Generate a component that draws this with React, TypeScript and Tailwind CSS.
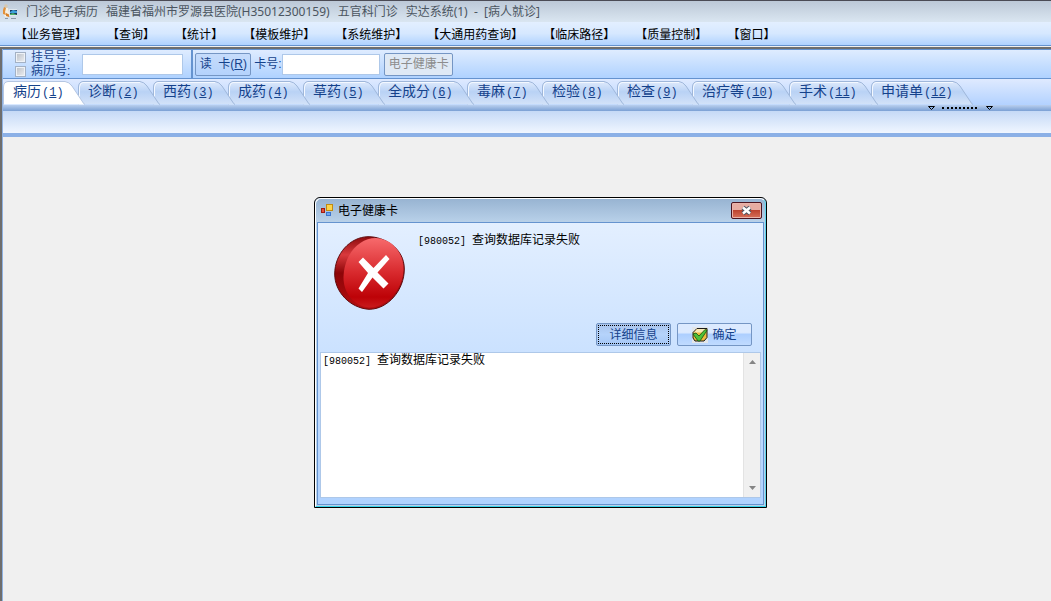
import { useState } from 'react';

const MENUS = ['业务管理', '查询', '统计', '模板维护', '系统维护', '大通用药查询', '临床路径', '质量控制', '窗口'];

const TABS = [
  { name: '病历', no: '1', width: 75 },
  { name: '诊断', no: '2', width: 75 },
  { name: '西药', no: '3', width: 75 },
  { name: '成药', no: '4', width: 75 },
  { name: '草药', no: '5', width: 75 },
  { name: '全成分', no: '6', width: 89 },
  { name: '毒麻', no: '7', width: 75 },
  { name: '检验', no: '8', width: 75 },
  { name: '检查', no: '9', width: 75 },
  { name: '治疗等', no: '10', width: 97 },
  { name: '手术', no: '11', width: 82 },
  { name: '申请单', no: '12', width: 95 },
];

const ERROR_TEXT = '查询数据库记录失败';

function AppIcon() {
  return (
    <svg className="h-4 w-4 shrink-0" viewBox="0 0 16 16">
      <circle cx="4" cy="2" r="1.800" fill="#d8c8b0" />
      <path d="M2 4h4l1 5-1 4H3L1 9z" fill="#f6efe2" />
      <path d="M2 3l2 1-1 4 1 3-3-1V6z" fill="#e2913a" />
      <path d="M4 9l4 2-1 2-3-1z" fill="#d9822b" />
      <rect x="7" y="5" width="8" height="7" fill="#dfe7ee" />
      <rect x="8" y="6" width="7" height="5" fill="#17355c" />
      <path d="M8 8l3-2 4 1v2H8z" fill="#3fa0dc" />
      <path d="M8 10l3-1 4 2H8z" fill="#4fb06a" />
      <path d="M3 14.500h3M9 14.500h5" stroke="#8a98a8" />
    </svg>
  );
}

function FormIcon() {
  return (
    <svg className="h-[14px] w-[14px]" viewBox="0 0 14 14">
      <rect x="6.5" y=".5" width="6" height="6" fill="#fbd34b" stroke="#c08a10" />
      <rect x="1.500" y="4.500" width="3" height="4" fill="#e4503a" stroke="#a01c10" />
      <rect x="6.500" y="8.500" width="4" height="3" fill="#6aa5f0" stroke="#3c74cc" />
    </svg>
  );
}

function ErrorIcon() {
  return (
    <svg className="mt-[3px] h-[74px] w-[71px] shrink-0" viewBox="0 0 71 74">
      <defs>
        <linearGradient id="face" x1="0" y1="0" x2="0" y2="1">
          <stop offset="0" stopColor="#f76a6c" />
          <stop offset="0.5" stopColor="#d8292d" />
          <stop offset="0.85" stopColor="#bd0207" />
          <stop offset="1" stopColor="#c81a1c" />
        </linearGradient>
        <linearGradient id="side" x1="0" y1="0" x2="0" y2="1">
          <stop offset="0" stopColor="#8d0a0d" />
          <stop offset="0.25" stopColor="#d93a3d" />
          <stop offset="0.5" stopColor="#8c0508" />
          <stop offset="1" stopColor="#b50d10" />
        </linearGradient>
      </defs>
      <path d="M34 .7C50 .5 70.3 12 70.3 33C70.3 54 54 73.3 35 73.3C16 72 .7 56 .7 38C.7 18 16 1 34 .7z" fill="url(#side)" stroke="#5e0a0c" />
      <path d="M42 2C58 3 69.5 16 69.5 34C69 54 52 71.5 35 71.5C19 70 9.500 56 9.500 42C9.500 20 24 2 42 2z" fill="url(#face)" />
      <path d="M29 21.500L39.500 32L52 19L55.500 23L43.500 36.500L54.500 47.500L49.500 52.500L38.500 41.500L28 56L24.500 52.500L34 37L24.500 26z" fill="#fff" />
    </svg>
  );
}

function OkIcon() {
  return (
    <svg className="h-4 w-4" viewBox="0 0 16 16">
      <path d="M0 0h16v16H0z" fill="#e3e6e8" />
      <path d="M1 5.500L5 1.500h10v9L12 14H3L1 11z" fill="#f0bb3e" stroke="#1b1b1b" />
      <path d="M5 2h9l-3 3.500H2z" fill="#fbe9b4" />
      <path d="M1 7l3-1 3 3 6-6.500 2 1L8 14H6z" fill="#4fc038" stroke="#14520c" strokeWidth="0.800" />
    </svg>
  );
}

type TabProps = { name: string; no: string; width: number; active: boolean; onClick: () => void };

function Tab({ name, no, width, active, onClick }: TabProps) {
  // the slanted edge runs over the left side of the next tab
  const w = width + 7;
  const shape = `M.5 23.500V6Q.5 1 5 .5H${w - 20}Q${w - 16} 1 ${w - 13} 5L${w - 3} 20Q${w - 1} 23.500 ${w} 23.500`;
  return (
    <button
      role="tab"
      aria-selected={active}
      onClick={onClick}
      className="relative h-6 shrink-0 pb-1 pl-[10px] text-left text-[14px] leading-5 text-[#15428b]"
      style={{ width }}
    >
      <svg className="absolute top-0 left-0 h-6" width={w + 1} height="24">
        <path d={shape} fill={active ? '#fff' : 'url(#tabFill)'} stroke={active ? '#b4c6e2' : '#9fb7da'} />
        {!active && <path d={`M1.500 22V6Q2 2 5 1.500H${w - 20}`} fill="none" stroke="#f3f8ff" />}
      </svg>
      <span className="relative whitespace-nowrap">
        {name}
        <span className="pl-px font-['Liberation_Mono',monospace] text-[12px]">
          (<u>{no}</u>)
        </span>
      </span>
    </button>
  );
}

function ErrorDialog() {
  return (
    <div
      role="dialog"
      aria-labelledby="dlg-title"
      className="absolute top-[197px] left-[314px] z-20 w-[453px] rounded-t-md border border-black bg-[#b4cae2] text-[12px]"
    >
      <div className="rounded-t-md border border-t-white border-r-[#5fd6ee] border-b-[#35d3ea] border-l-white bg-linear-to-b from-[#98b4d2] to-[#bad2ea] to-[24px] px-px pb-px">
        <div className="flex h-[23px] items-center gap-1 pl-[3px]">
          <FormIcon />
          <h1 id="dlg-title" className="flex-1 leading-4 text-black">电子健康卡</h1>
          <button
            aria-label="关闭"
            className="mr-[2px] flex h-[17px] w-[31px] items-center justify-center rounded-xs border border-[#4c1420] bg-linear-to-b from-[#e7aca2] from-45% via-[#bd4430] via-50% to-[#d8705a] shadow-[inset_0_0_0_1px_#e9b3aa]"
          >
            <svg width="13" height="11" viewBox="0 0 13 11">
              <path d="M3 2.500l7 6M10 2.500l-7 6" stroke="#4b5563" strokeWidth="4.500" />
              <path d="M3 2.500l7 6M10 2.500l-7 6" stroke="#fff" strokeWidth="2.500" />
            </svg>
          </button>
        </div>
        <div className="border border-[#6593cf] bg-linear-to-b from-[#e3efff] to-[#afd2ff] px-[2px] pb-[6px]">
          <div className="flex items-start gap-[13px] pt-[10px] pl-[14px]">
            <ErrorIcon />
            <p className="text-black leading-[14px] whitespace-nowrap">
              <span className="font-['Liberation_Mono',monospace] text-[10px]">[980052] </span>
              {ERROR_TEXT}
            </p>
          </div>
          <div className="mt-[13px] flex justify-end gap-[6px] pr-[9px] text-[#15428b]">
            <button className="h-[23px] w-[75px] rounded-xs border border-[#7596c4] bg-linear-to-b from-[#a9c4ec] via-[#b5d3fb] to-[#a4c6f5] p-px">
              <span className="flex h-full items-center justify-center border border-dotted border-black">详细信息</span>
            </button>
            <button className="flex h-[23px] w-[75px] items-center justify-center gap-1 rounded-xs border border-[#7596c4] bg-linear-to-b from-[#dceaff] from-40% via-[#adcfff] via-50% to-[#c0dbff]">
              <OkIcon />
              确定
            </button>
          </div>
          <div className="mt-[6px] flex h-[146px] border border-[#aec8e9] bg-white">
            <p className="flex-1 pl-[2px] text-black leading-[14px]">
              <span className="font-['Liberation_Mono',monospace] text-[10px]">[980052] </span>
              {ERROR_TEXT}
            </p>
            <div className="flex w-[17px] flex-col items-center justify-between border-l border-[#e3e3e3] bg-[#f0f0f0] py-[7px]">
              <svg width="7" height="4"><path d="M0 4l3.500-4 3.500 4z" fill="#858585" /></svg>
              <svg width="7" height="4"><path d="M0 0l3.500 4 3.500-4z" fill="#858585" /></svg>
            </div>
          </div>
        </div>
      </div>
    </div>
  );
}

export default function App() {
  const [tab, setTab] = useState('1');
  const [cardNo, setCardNo] = useState('');
  const [keyword, setKeyword] = useState('');

  return (
    <div className="relative flex min-h-screen flex-col overflow-hidden bg-[#f0f0f0] font-['Liberation_Sans','Noto_Sans_CJK_SC',sans-serif] text-[12px]">
      <header className="flex h-[22px] items-center gap-2 border-t border-[#4b4b55] bg-linear-to-b from-[#bcc8d7] to-[#dae6f1] pl-[2px] leading-5 whitespace-nowrap text-[#4b5560]">
        <AppIcon />
        <span>门诊电子病历</span>
        <span className="font-['Noto_Sans','Noto_Sans_CJK_SC',sans-serif]">福建省福州市罗源县医院(H35012300159)</span>
        <span>五官科门诊</span>
        <span className="font-['Noto_Sans','Noto_Sans_CJK_SC',sans-serif]">实达系统(1)&nbsp; -&nbsp; [病人就诊]</span>
      </header>

      <nav className="flex h-6 items-center gap-5 border-b border-[#6593cf] bg-linear-to-b from-[#e3efff] via-[#d6e8ff] to-[#afd2ff] pt-[3px] pl-[15px] whitespace-nowrap text-black">
        {MENUS.map((m) => (
          <button key={m} className="leading-4">【{m}】</button>
        ))}
      </nav>

      <main className="mt-px flex flex-1 flex-col border-t-2 border-l-2 border-[#6e6e6e]">
        <div className="flex flex-1 flex-col border-l border-[#8fb2e2]">
          <div className="flex h-[30px] items-center border-y border-[#6593cf] bg-linear-to-b from-[#dfecff] to-[#afd2ff] pl-3 whitespace-nowrap text-[#15428b]">
            <div className="flex flex-col">
              {['挂号号:', '病历号:'].map((t) => (
                <label key={t} className="flex h-[14px] items-center gap-[5px] leading-[14px]">
                  <input
                    type="checkbox"
                    className="h-[11px] w-[11px] appearance-none border border-[#a3b1c4] bg-linear-to-br from-[#b9bec6] to-[#eef0f2] shadow-[inset_0_0_0_1px_#eef2f7]"
                  />
                  {t}
                </label>
              ))}
            </div>
            <input
              aria-label="挂号号/病历号"
              value={keyword}
              onChange={(e) => setKeyword(e.target.value)}
              className="ml-3 h-[21px] w-[101px] border border-[#aec8e9] bg-white px-1"
            />
            <div className="mr-[2px] ml-2 h-full w-[2px] bg-[#6593cf]" />
            <button className="h-[23px] w-14 rounded-xs border border-[#7596c4] bg-linear-to-b from-[#c6dcfb] to-[#b4d2fc]">
              读&nbsp; 卡(<u>R</u>)
            </button>
            <label htmlFor="card" className="ml-[3px] w-7">卡号:</label>
            <input
              id="card"
              value={cardNo}
              onChange={(e) => setCardNo(e.target.value)}
              className="h-[21px] w-[98px] border border-[#aec8e9] bg-white px-1"
            />
            <button disabled className="ml-1 h-[23px] w-[69px] rounded-xs border border-[#7596c4] bg-[#dfe9f5] text-[#8d8d8d]">
              电子健康卡
            </button>
          </div>

          <div className="bg-linear-to-b from-[#dfeaff] to-[#b3d2ff] pt-[2px]">
            <svg className="absolute h-0 w-0">
              <defs>
                <linearGradient id="tabFill" x1="0" y1="0" x2="0" y2="1">
                  <stop offset="0" stopColor="#dfeafc" />
                  <stop offset="0.45" stopColor="#b9d2f5" />
                  <stop offset="1" stopColor="#d3e2f8" />
                </linearGradient>
              </defs>
            </svg>
            {/* reversed so that each tab paints over the one to its right */}
            <div role="tablist" className="flex flex-row-reverse justify-end">
              {[...TABS].reverse().map((t) => (
                <Tab key={t.no} {...t} active={t.no === tab} onClick={() => setTab(t.no)} />
              ))}
            </div>
          </div>
          <div className="flex h-[6px] items-center bg-linear-to-b from-[#b9cfee] to-[#7ba0d4] pl-[925px]">
            <svg width="7" height="5"><path d="M.5 .5h6L3.500 3.500z" fill="#8fb5ea" stroke="#000" /></svg>
            <div className="mr-[9px] ml-[7px] h-[2px] w-[35px] border-t-2 border-dotted border-black" />
            <svg width="7" height="5"><path d="M.5 .5h6L3.500 3.500z" fill="#8fb5ea" stroke="#000" /></svg>
          </div>
          <div className="h-[22px] bg-linear-to-b from-[#c5d9f6] to-[#f0f6ff]" />
          <div className="h-1 bg-[#8bb0e6]" />
        </div>
      </main>

      <ErrorDialog />
    </div>
  );
}
